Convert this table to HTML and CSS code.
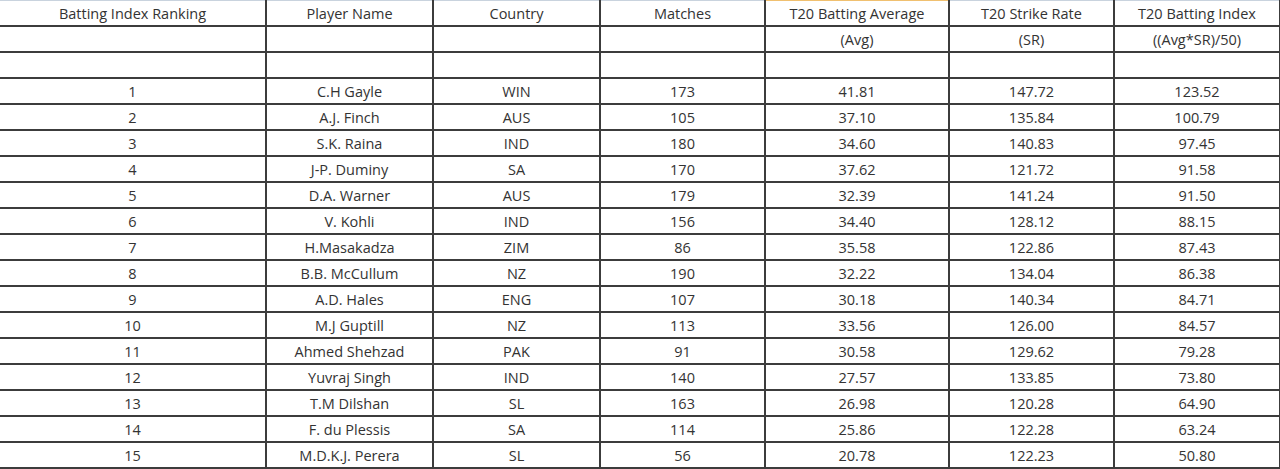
FILE: index.html
```html
<!DOCTYPE html>
<html>
<head>
<meta charset="utf-8">
<link rel="stylesheet" href="styles.css">
</head>
<body>
<table class="sheet">
<colgroup>
<col class="c1"><col class="c2"><col class="c3"><col class="c4"><col class="c5"><col class="c6"><col class="c7">
</colgroup>
<tbody>
<tr class="top"><td>Batting Index Ranking</td><td>Player Name</td><td>Country</td><td>Matches</td><td class="sel">T20 Batting Average</td><td>T20 Strike Rate</td><td>T20 Batting Index</td></tr>
<tr><td></td><td></td><td></td><td></td><td>(Avg)</td><td>(SR)</td><td>((Avg*SR)/50)</td></tr>
<tr><td></td><td></td><td></td><td></td><td></td><td></td><td></td></tr>
<tr><td>1</td><td>C.H Gayle</td><td>WIN</td><td>173</td><td>41.81</td><td>147.72</td><td>123.52</td></tr>
<tr><td>2</td><td>A.J. Finch</td><td>AUS</td><td>105</td><td>37.10</td><td>135.84</td><td>100.79</td></tr>
<tr><td>3</td><td>S.K. Raina</td><td>IND</td><td>180</td><td>34.60</td><td>140.83</td><td>97.45</td></tr>
<tr><td>4</td><td>J-P. Duminy</td><td>SA</td><td>170</td><td>37.62</td><td>121.72</td><td>91.58</td></tr>
<tr><td>5</td><td>D.A. Warner</td><td>AUS</td><td>179</td><td>32.39</td><td>141.24</td><td>91.50</td></tr>
<tr><td>6</td><td>V. Kohli</td><td>IND</td><td>156</td><td>34.40</td><td>128.12</td><td>88.15</td></tr>
<tr><td>7</td><td>H.Masakadza</td><td>ZIM</td><td>86</td><td>35.58</td><td>122.86</td><td>87.43</td></tr>
<tr><td>8</td><td>B.B. McCullum</td><td>NZ</td><td>190</td><td>32.22</td><td>134.04</td><td>86.38</td></tr>
<tr><td>9</td><td>A.D. Hales</td><td>ENG</td><td>107</td><td>30.18</td><td>140.34</td><td>84.71</td></tr>
<tr><td>10</td><td>M.J Guptill</td><td>NZ</td><td>113</td><td>33.56</td><td>126.00</td><td>84.57</td></tr>
<tr><td>11</td><td>Ahmed Shehzad</td><td>PAK</td><td>91</td><td>30.58</td><td>129.62</td><td>79.28</td></tr>
<tr><td>12</td><td>Yuvraj Singh</td><td>IND</td><td>140</td><td>27.57</td><td>133.85</td><td>73.80</td></tr>
<tr><td>13</td><td>T.M Dilshan</td><td>SL</td><td>163</td><td>26.98</td><td>120.28</td><td>64.90</td></tr>
<tr><td>14</td><td>F. du Plessis</td><td>SA</td><td>114</td><td>25.86</td><td>122.28</td><td>63.24</td></tr>
<tr><td>15</td><td>M.D.K.J. Perera</td><td>SL</td><td>56</td><td>20.78</td><td>122.23</td><td>50.80</td></tr>
</tbody>
</table>
</body>
</html>
```

FILE: styles.css
```css
html, body {
  margin: 0;
  padding: 0;
  background: #ffffff;
}
.sheet {
  width: 1280px;
  table-layout: fixed;
  border-collapse: collapse;
  font-family: "Open Sans", "Liberation Sans", sans-serif;
  font-size: 14.5px;
  color: #333333;
}
.c1 { width: 266px; }
.c2 { width: 167px; }
.c3 { width: 167px; }
.c4 { width: 165px; }
.c5 { width: 184px; }
.c6 { width: 165px; }
.c7 { width: 166px; }
.sheet td {
  height: 22px;
  padding: 2px 0 0 0;
  text-align: center;
  vertical-align: middle;
  border: 2px solid #3c3c3c;
  white-space: nowrap;
  line-height: 22px;
}
.sheet tr.top td {
  border-top: 1px solid #c9d3de;
}
.sheet tr.top td.sel {
  border-top: 1px solid #f0c070;
}
.sheet tr td:first-child {
  border-left: none;
}
```
